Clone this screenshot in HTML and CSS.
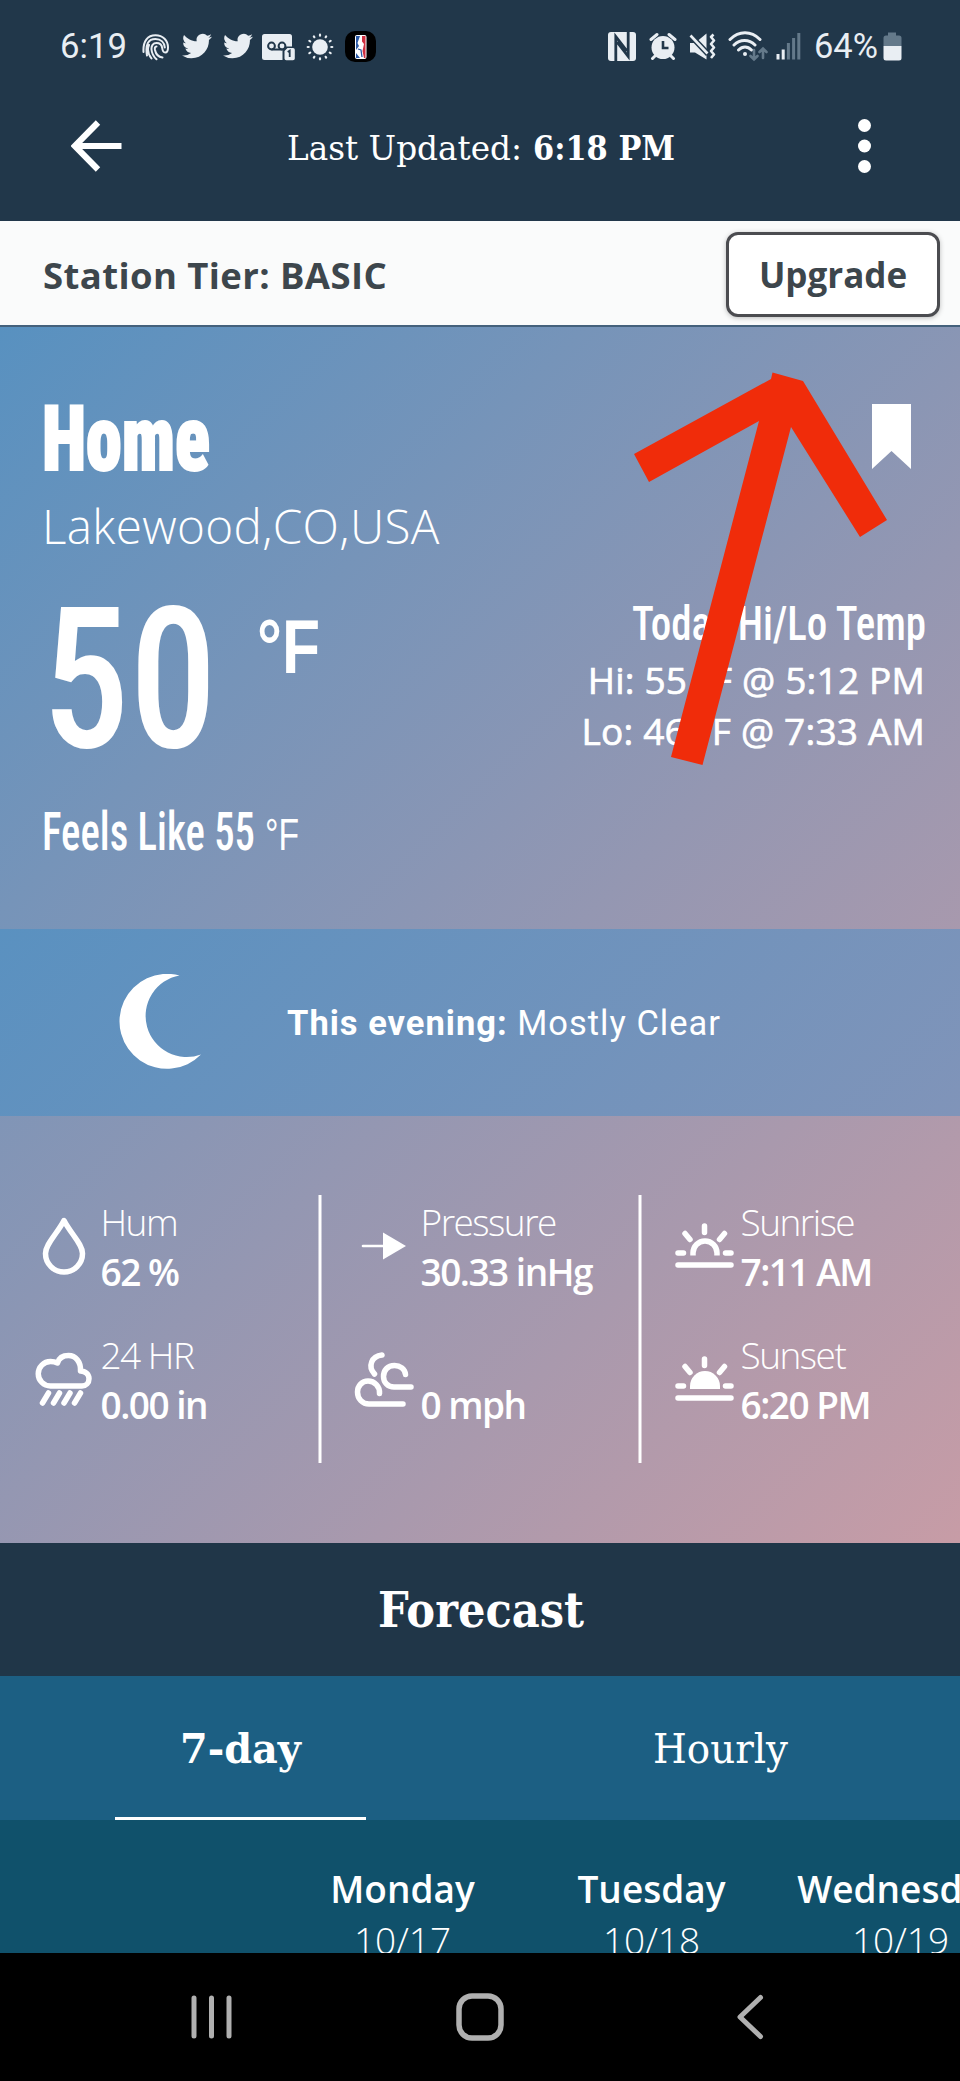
FILE: index.html
```html
<!DOCTYPE html>
<html lang="en">
<head>
<meta charset="utf-8">
<title>Weather Station</title>
<link rel="stylesheet" href="styles.css">
</head>
<body>
<div class="phone">
  <header class="top">
    <div class="status">
      <svg class="fit roboto time" width="66" height="25"><text x="-1" y="25" textLength="67" lengthAdjust="spacingAndGlyphs">6:19</text></svg>
      <svg class="ico finger" width="28" height="32" viewBox="0 0 28 32" fill="none" stroke="#e9eef3" stroke-width="2" stroke-linecap="round">
        <path d="M1.500 21C.8 9.500 6 4.200 13.500 4.200S26 9.500 26 16.500c0 3-1 5-2.800 5-2 0-2.700-1.700-3-4.500-.4-3-2.500-5-5.700-5-3.500 0-5.300 2.800-5 6.500.3 4 2.500 7.500 5 9.800M5 24.500C3 13 6.500 8 13.500 8c5.500 0 9 3.500 9.300 8.500M9.500 27.500C5.500 22 5.500 17 7 14M14.500 15.500c-1.800 0-1.800 1.500-1.500 3.500.8 4 3.500 7 7.500 7.500"/>
      </svg>
      <svg class="ico bird" width="30" height="32" viewBox="0 0 24 25.600"><path fill="#e9eef3" d="M23.950 4.570a10 10 0 0 1-2.830.770 4.960 4.960 0 0 0 2.170-2.720c-.950.550-2 .950-3.130 1.180a4.920 4.920 0 0 0-8.380 4.480C7.690 8.100 4.070 6.130 1.640 3.160a4.920 4.920 0 0 0 1.520 6.570 4.900 4.900 0 0 1-2.230-.610v.060a4.920 4.920 0 0 0 3.950 4.830 5 5 0 0 1-2.210.080 4.940 4.940 0 0 0 4.600 3.420A9.870 9.870 0 0 1 0 19.540a14 14 0 0 0 7.550 2.210c9.050 0 14-7.500 14-13.990l-.02-.630a9.940 9.940 0 0 0 2.460-2.550z"/></svg>
      <svg class="ico bird2" width="30" height="32" viewBox="0 0 24 25.600"><path fill="#e9eef3" d="M23.950 4.570a10 10 0 0 1-2.830.770 4.960 4.960 0 0 0 2.170-2.720c-.950.550-2 .950-3.130 1.180a4.920 4.920 0 0 0-8.380 4.480C7.690 8.100 4.070 6.130 1.640 3.160a4.920 4.920 0 0 0 1.520 6.570 4.900 4.900 0 0 1-2.230-.610v.060a4.920 4.920 0 0 0 3.950 4.830 5 5 0 0 1-2.210.080 4.940 4.940 0 0 0 4.600 3.420A9.870 9.870 0 0 1 0 19.540a14 14 0 0 0 7.550 2.210c9.050 0 14-7.500 14-13.990l-.02-.630a9.940 9.940 0 0 0 2.460-2.550z"/></svg>
      <svg class="ico voicemail" width="34" height="32" viewBox="0 0 34 32">
        <rect x="0" y="3" width="30" height="26" rx="2.500" fill="#e9eef3"/>
        <path d="M9.500 18.500h11" stroke="#21374a" stroke-width="2"/>
        <circle cx="9.500" cy="15" r="3.400" fill="none" stroke="#21374a" stroke-width="2"/>
        <circle cx="20" cy="15" r="3.400" fill="none" stroke="#21374a" stroke-width="2"/>
        <path d="M20.500 30V19l3.500-3.500h10V30z" fill="#21374a"/>
        <path d="M22.500 27.500V20l3-3H31a1.800 1.800 0 0 1 1.800 1.800v8.700A1.800 1.800 0 0 1 31 29.300h-6.700a1.800 1.800 0 0 1-1.800-1.800z" fill="#e9eef3"/>
        <path d="M25.700 21l2-1.300V26" fill="none" stroke="#21374a" stroke-width="1.800"/>
      </svg>
      <svg class="ico sun" width="28" height="32" viewBox="-14 -16 28 32" stroke="#e9eef3" stroke-width="2.200" stroke-linecap="round">
        <circle r="7.800" fill="#e9eef3" stroke="none"/>
        <path d="M0-12.300v1M0 12.300v-1M-12.300 0h1M12.300 0h-1M6.150-10.650l-.5.870M-6.150-10.650l.5.870M6.150 10.650l-.5-.870M-6.150 10.650l.5-.870M10.650-6.150l-.87.500M-10.650-6.150l.87.500M10.650 6.150l-.87-.500M-10.650 6.150l.87-.500"/>
      </svg>
      <svg class="ico league" width="31" height="32" viewBox="0 0 31 32">
        <rect width="31" height="31" rx="10" fill="#000"/>
        <rect x="10" y="4" width="11.500" height="24" rx="2" fill="#fff"/>
        <path d="M11 5h4l-2.500 7 1.500 3-3 4zM11 22l4 5h-4z" fill="#2b5aa6"/>
        <path d="M17 5h3.500v22H19l-1.500-7 1.500-7-2-2.500z" fill="#cf3040"/>
        <path d="M13 18l3 1 1 7" fill="none" stroke="#2b5aa6" stroke-width="1.300"/>
      </svg>
      <span class="grow"></span>
      <svg class="ico" width="28" height="32" viewBox="0 0 28 32">
        <rect y="1" width="28" height="29" rx="3" fill="#e9eef3"/>
        <path d="M7.800 31V5.500L19 20M20.200 0v25.500L9 11" fill="none" stroke="#21374a" stroke-width="2.800"/>
      </svg>
      <svg class="ico alarm" width="28" height="32" viewBox="0 0 28 32">
        <circle cx="14" cy="16.500" r="11.500" fill="#e9eef3"/>
        <path d="M2 8.500l6-5M26 8.500l-6-5M6 25l-2.500 2.500M22 25l2.500 2.500" stroke="#e9eef3" stroke-width="3" stroke-linecap="round"/>
        <path d="M14 10v7h5.500" fill="none" stroke="#21374a" stroke-width="2.600"/>
      </svg>
      <svg class="ico mute" width="28" height="32" viewBox="0 0 28 32">
        <path d="M1 12h5l11.500-9.500v26L6 21.500H1z" fill="#e9eef3"/>
        <path d="M1 4l18 19" stroke="#21374a" stroke-width="5.500"/>
        <path d="M1.500 4.500l17 18" stroke="#e9eef3" stroke-width="2.600"/>
        <path d="M24.500 3.500l-2.500 2.500 3 3.500-3 3.500 3 3.500-3 3.500 3 3.500-3 3.500" fill="none" stroke="#e9eef3" stroke-width="2.600" stroke-linejoin="round"/>
      </svg>
      <svg class="ico wifi" width="40" height="32" viewBox="0 0 40 32" fill="none" stroke="#e9eef3" stroke-width="3" stroke-linecap="round">
        <path d="M2 8.500C11-.5 23-.5 32 8.500M6 14c6-6 15-6 21 0M10.500 19c4-4 9-4 13 0"/>
        <circle cx="17" cy="23" r="2" fill="#e9eef3" stroke="none"/>
        <path d="M26 19v9M22.500 25l3.500 3.500 3.500-3.500M35 27v-9M31.500 21l3.500-3.500 3.500 3.500" stroke="#64798a" stroke-width="2.600"/>
      </svg>
      <svg class="ico signal" width="26" height="32" viewBox="0 0 26 32">
        <path d="M.5 23h3v5.500h-3zM5.700 18.500h3v10h-3z" fill="#e9eef3"/>
        <path d="M10.900 12h3v16.500h-3zM16.100 7h3v21.500h-3zM21.300 2h3v26.500h-3z" fill="#64798a"/>
      </svg>
      <svg class="fit roboto pct" width="62" height="25"><text x="-1" y="25" textLength="64" lengthAdjust="spacingAndGlyphs">64%</text></svg>
      <svg class="ico batt" width="19" height="32" viewBox="0 0 19 32">
        <path d="M5 1.500h8v3h3q2.500 0 2.500 2.500v8H.5V7q0-2.500 2.500-2.500h2z" fill="#64798a"/>
        <path d="M.5 15h18v12a2.500 2.500 0 0 1-2.500 2.500H3A2.500 2.500 0 0 1 .5 27z" fill="#e9eef3"/>
      </svg>
    </div>
    <div class="appbar">
      <svg class="back" width="52" height="52" viewBox="0 0 52 52" fill="none" stroke="#fff" stroke-width="6.200"><path d="M50.500 26H4.500M27 2.500L3.800 26 27 49.500"/></svg>
      <div class="updated">
        <svg class="fit serif" width="234" height="25"><text x="-1" y="25" textLength="235" lengthAdjust="spacingAndGlyphs">Last Updated:</text></svg>
        <svg class="fit serif bold" width="141" height="25"><text x="-1" y="25" textLength="142" lengthAdjust="spacingAndGlyphs">6:18 PM</text></svg>
      </div>
      <svg class="dots" width="13" height="54" viewBox="0 0 13 54" fill="#fff"><circle cx="6.500" cy="6.500" r="6.500"/><circle cx="6.500" cy="27" r="6.500"/><circle cx="6.500" cy="47.500" r="6.500"/></svg>
    </div>
  </header>

  <section class="tier">
    <span class="tier-name">Station Tier: BASIC</span>
    <button class="upgrade">Upgrade</button>
  </section>

  <main class="weather">
    <section class="hero">
      <div class="hero-left">
        <svg class="fit home" width="163" height="66"><text x="-3" y="65" textLength="168" lengthAdjust="spacingAndGlyphs">Home</text></svg>
        <p class="place">Lakewood,CO,USA</p>
        <div class="temp">
          <svg class="fit cond big" width="166" height="141"><text x="-9" y="140" textLength="175" lengthAdjust="spacingAndGlyphs">50</text></svg>
          <svg class="fit arial unit" width="60" height="55"><text x="-1" y="55" textLength="63" lengthAdjust="spacingAndGlyphs">°F</text></svg>
        </div>
        <div class="feels">
          <svg class="fit cond mid" width="210" height="39"><text x="-2" y="39" textLength="213" lengthAdjust="spacingAndGlyphs">Feels Like 55</text></svg>
          <svg class="fit arial small" width="34" height="31"><text x="0" y="31" textLength="34" lengthAdjust="spacingAndGlyphs">°F</text></svg>
        </div>
      </div>
      <div class="hero-right">
        <svg class="bookmark" width="39" height="65" viewBox="0 0 39 65"><path fill="#fff" d="M0 0h39v65L19.500 47 0 65z"/></svg>
        <svg class="fit cond hilo" width="293" height="35"><text x="0" y="35" textLength="294" lengthAdjust="spacingAndGlyphs">Today Hi/Lo Temp</text></svg>
        <p class="range">Hi: 55 °F @ 5:12 PM</p>
        <p class="range">Lo: 46 °F @ 7:33 AM</p>
      </div>
    </section>

    <section class="evening">
      <svg class="moon" width="83" height="96" viewBox="0 0 83 96"><path fill="#fff" d="M60.500 1.500A47.500 47.500 0 1 0 82 80.500 41.100 41.100 0 1 1 60.500 1.500z"/></svg>
      <p class="outlook"><b>This evening:</b> Mostly Clear</p>
    </section>

    <section class="stats">
      <div class="col">
        <div class="stat">
          <svg class="stat-ico" viewBox="0 0 102 133"><path d="M64 24.500C57 38 45.500 48 45.500 57.500a18.500 18.500 0 0 0 37 0C82.500 48 71 38 64 24.500z"/></svg>
          <dl><dt>Hum</dt><dd>62 %</dd></dl>
        </div>
        <div class="stat">
          <svg class="stat-ico" viewBox="0 0 102 133"><path d="M50.500 57a12 12 0 0 1 0-24.500c3 0 5 .5 7 1.500C59 29 63 26.500 68.500 26.500c7 0 12.500 6 12 15.500 5 0 8.500 3.500 8.500 7.700S86 57 82 57zM48.500 64L42.500 74M59.500 64L53.500 74M70 64L64 74M80.500 64L74.500 74"/></svg>
          <dl><dt>24 HR</dt><dd>0.00 in</dd></dl>
        </div>
      </div>
      <div class="col">
        <div class="stat">
          <svg class="stat-ico" viewBox="0 0 102 133"><path d="M43 50h21" stroke-width="2.600"/><path d="M63 36.500L86 50 63 63.500z" fill="#fff" stroke="none"/></svg>
          <dl><dt>Pressure</dt><dd>30.33 inHg</dd></dl>
        </div>
        <div class="stat">
          <svg class="stat-ico" viewBox="0 0 102 133"><path d="M62 26C51.500 27 47.500 37.500 54.500 45M85.500 45.500C85 40 80 36.500 74.500 36.500c-7 0-11 5-11 11 0 6 4.500 10.500 10.500 10.500H91M59.500 64.500C60 57.500 54.500 52 48 52c-6 0-10.500 5-10.500 11 0 7 5 12 11.500 12H83"/></svg>
          <dl><dt>&nbsp;</dt><dd>0 mph</dd></dl>
        </div>
      </div>
      <div class="col">
        <div class="stat">
          <svg class="stat-ico" viewBox="0 0 102 133"><path d="M53 59.500V57a12 12 0 0 1 24 0v2.500" stroke-linecap="butt"/><path d="M64.500 30v6.500M45 37.500l5 6M84.500 37.500l-5 6M38 57h5.500M85.500 57H91M38 69h53"/></svg>
          <dl><dt>Sunrise</dt><dd>7:11 AM</dd></dl>
        </div>
        <div class="stat">
          <svg class="stat-ico" viewBox="0 0 102 133"><path d="M50 60V57a15 15 0 0 1 30 0v3z" fill="#fff" stroke="none"/><path d="M64.500 30v6.500M45 37.500l5 6M84.500 37.500l-5 6M38 57h5.500M85.500 57H91M38 69h53"/></svg>
          <dl><dt>Sunset</dt><dd>6:20 PM</dd></dl>
        </div>
      </div>
    </section>
  </main>

  <section class="forecast-title">
    <svg class="fit serif bold fc" width="205" height="35"><text x="-1" y="35" textLength="206" lengthAdjust="spacingAndGlyphs">Forecast</text></svg>
  </section>
  <nav class="tabs">
    <div class="tab active"><svg class="fit serif bold tb" width="122" height="30"><text x="0" y="30" textLength="121" lengthAdjust="spacingAndGlyphs">7-day</text></svg></div>
    <div class="tab"><svg class="fit serif tb" width="135" height="30"><text x="0" y="30" textLength="135" lengthAdjust="spacingAndGlyphs">Hourly</text></svg></div>
  </nav>
  <section class="days">
    <div class="day"><b>Monday</b><span>10/17</span></div>
    <div class="day"><b>Tuesday</b><span>10/18</span></div>
    <div class="day"><b>Wednesday</b><span>10/19</span></div>
  </section>
  <footer class="navbar">
    <svg width="42" height="44" viewBox="0 0 42 44" stroke="#b0b0b0" stroke-width="5" stroke-linecap="round"><path d="M3 3v38M20.500 3v38M38 3v38"/></svg>
    <svg class="home-key" width="48" height="48" viewBox="0 0 48 48"><rect x="3" y="3" width="42" height="42" rx="13" fill="none" stroke="#b0b0b0" stroke-width="5.500"/></svg>
    <svg width="28" height="46" viewBox="0 0 28 46" fill="none" stroke="#b0b0b0" stroke-width="5" stroke-linecap="round" stroke-linejoin="round"><path d="M24.500 3.500L4 23l20.500 19.500"/></svg>
  </footer>

  <svg class="pointer" width="254" height="394" viewBox="633 372 254 394"><path fill="#f02c0a" d="M772.500 372.500L803 381 887 520 860 537 791 427 702.500 765 671 757 759 421 649 482 634 454 771 379z"/></svg>
</div>
</body>
</html>
```

FILE: styles.css
```css
* { box-sizing: border-box; }
body { margin: 0; background: #000; font-family: "Open Sans", "Noto Sans", sans-serif; }
p, dl, dd { margin: 0; }
svg { display: block; flex: none; }

.phone { position: relative; width: 960px; height: 2081px; overflow: hidden; color: #fff; }

/* text scaled to a given width; the box is the height of a capital letter */
.fit { overflow: visible; fill: #fff; }
.roboto { font-family: Roboto, sans-serif; font-size: 35px; fill: #e9eef3; }
.serif { font-family: "DejaVu Serif", serif; font-size: 34px; }
.bold { font-weight: 700; }
.cond { font-family: Roboto, sans-serif; font-stretch: 75%; font-weight: 600; }
.arial { font-family: "Liberation Sans", Arial, sans-serif; }

/* header */
.top { height: 221px; background: #21374a; }
.status { display: flex; height: 94px; padding: 31px 58px 0 61px; }
.time, .pct { margin-top: 2px; }
.finger { margin-left: 15px; }
.bird { margin-left: 12px; }
.bird2 { margin-left: 11px; }
.voicemail { margin-left: 9px; }
.sun { margin-left: 10px; }
.league { margin-left: 11px; }
.grow { flex: 1; }
.alarm { margin-left: 13px; }
.mute { margin-left: 12px; }
.wifi { margin-left: 11px; }
.signal { margin-left: 8px; }
.pct { margin-left: 13px; }
.batt { margin-left: 6px; }

.appbar { display: grid; grid-template-columns: 288px 1fr 102px; align-items: center; height: 104px; }
.back { margin-left: 71px; }
.updated { display: flex; gap: 12px; padding-top: 3px; }

/* tier */
.tier { display: flex; align-items: center; justify-content: space-between; height: 106px; padding: 2px 20px 0 43px; background: #fafbfb; border-bottom: 2px solid #44617c; }
.tier-name { padding-top: 1px; font-size: 36.5px; font-weight: 700; color: #3d464c; letter-spacing: .4px; }
.upgrade { width: 214px; height: 85px; padding: 0; border: 3px solid #4b4c50; border-radius: 12px; background: #fff; box-shadow: 0 1px 5px rgba(0,0,0,.25); color: #3d464c; font: 700 35px/1 "Open Sans", sans-serif; }

/* current weather */
.weather { background: linear-gradient(135deg, #5891c0, #c79ca6); }
.hero { display: flex; justify-content: space-between; height: 602px; padding: 77px 35px 0 44px; }
.home { margin: 1px 0 0 1px; font-family: Roboto, sans-serif; font-stretch: 75%; font-weight: 900; font-size: 90px; stroke: #fff; stroke-width: 2px; }
.place { margin: 25px 0 0 -2px; font-size: 47.6px; line-height: 60px; font-weight: 300; letter-spacing: .35px; }
.temp { display: flex; margin: 51px 0 0 7px; height: 141px; }
.big { font-size: 197px; font-weight: 500; }
.unit { margin: 11px 0 0 41px; font-size: 76px; font-weight: 700; }
.feels { display: flex; align-items: flex-end; gap: 11px; margin-top: 63px; }
.mid { font-size: 54px; font-weight: 500; }
.small { font-size: 44px; }
.hero-right { display: flex; flex-direction: column; align-items: flex-end; }
.bookmark { margin-right: 14px; }
.hilo { margin: 136px 0 14px; font-size: 49px; font-weight: 500; }
.range { font-size: 37px; line-height: 51px; font-weight: 500; letter-spacing: .2px; -webkit-text-stroke: .7px #fff; }

.evening { display: flex; align-items: center; height: 187px; background: linear-gradient(135deg, #5a91c0, #8094b9); }
.moon { margin: -2px 85px 0 119px; }
.outlook { padding-top: 1px; font: 400 34.500px/50px Roboto, sans-serif; letter-spacing: 1px; }

.stats { display: grid; grid-template-columns: repeat(3, 1fr); height: 427px; padding-top: 79px; }
.col { height: 268px; padding-top: 1px; }
.col + .col { box-shadow: -1.500px 0 0 #fff, inset 1.500px 0 0 #fff; }
.stat { display: flex; height: 133px; }
.stat-ico { width: 102px; height: 133px; fill: none; stroke: #fff; stroke-width: 5.500; stroke-linecap: round; stroke-linejoin: round; }
.stat dl { margin: 1px 0 0 -1.500px; font-size: 37px; line-height: 50px; letter-spacing: -1.500px; white-space: nowrap; }
.stat dt { font-weight: 300; }
.stat dd { font-weight: 600; }

/* forecast */
.forecast-title { display: flex; justify-content: center; height: 133px; padding: 49px 0 0 3px; background: #203648; }
.fc { font-size: 48px; }
.tabs { display: grid; grid-template-columns: 1fr 1fr; height: 144px; background: #1c5f83; }
.tab { display: flex; justify-content: center; padding-top: 57px; }
.active { margin: 0 114px 0 115px; border-bottom: 3px solid #fff; }
.tb { font-size: 41px; }
.days { display: flex; height: 133px; padding: 43px 0 0 278px; background: #10516b; overflow: hidden; }
.day { flex: 0 0 249px; display: flex; flex-direction: column; align-items: center; font-size: 37px; line-height: 51px; }
.day b { font-weight: 600; }
.day span { font-weight: 300; }
.navbar { display: flex; position: relative; align-items: center; justify-content: space-between; height: 128px; padding: 0 196px 0 191px; background: #000; }
.home-key { margin-right: 9px; }

.pointer { position: absolute; left: 633px; top: 372px; }
```
